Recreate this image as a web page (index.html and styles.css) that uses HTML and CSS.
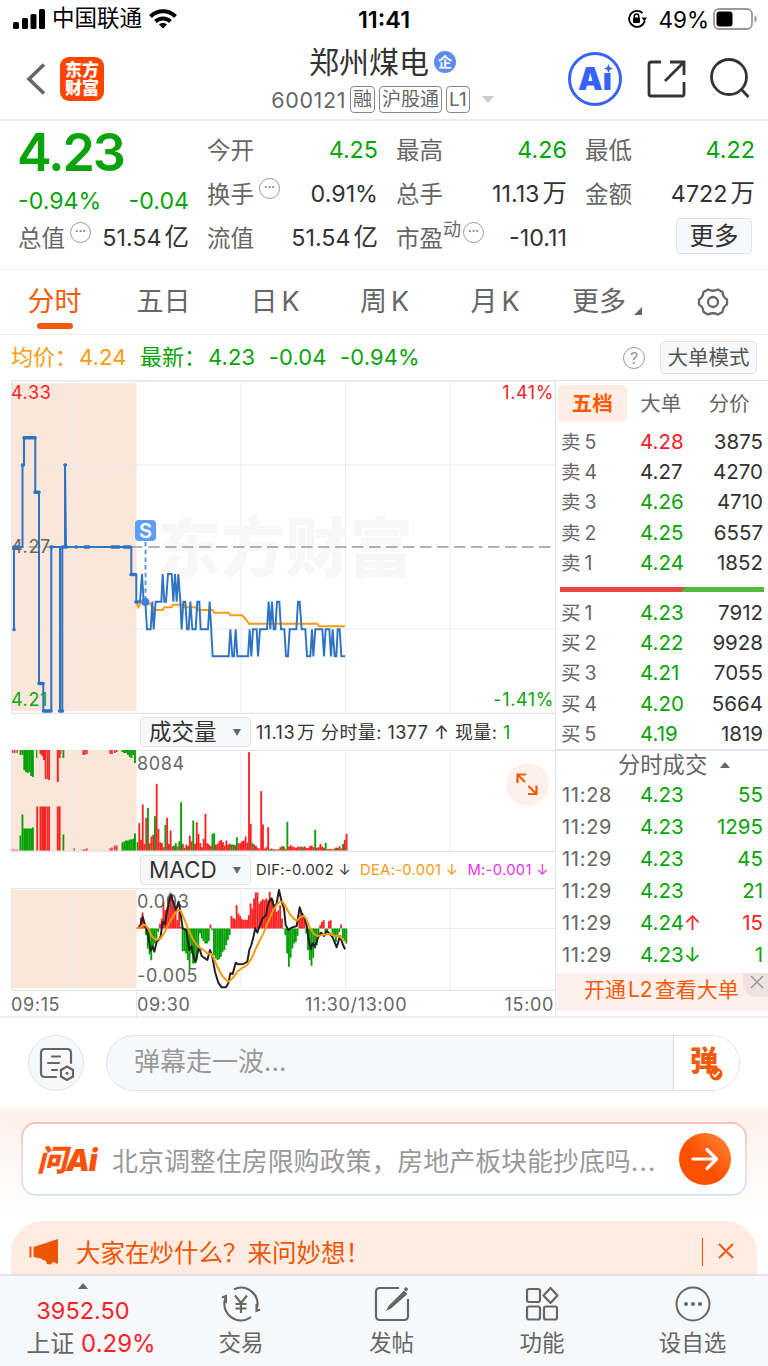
FILE: index.html
```html
<!DOCTYPE html>
<html lang="zh-CN">
<head>
    <meta charset="UTF-8">
    <meta name="viewport" content="width=device-width, initial-scale=1.0">
    <title>郑州煤电 600121</title>
    <link rel="stylesheet" href="styles.css">
</head>
<body>
    <div class="status-bar">
        <div class="status-left">
            <svg width="33" height="20" viewBox="0 0 33 20"><rect x="0" y="13" width="6" height="7" rx="1.5"/><rect x="9" y="9" width="6" height="11" rx="1.5"/><rect x="17.500" y="5" width="6" height="15" rx="1.500"/><rect x="26" y="0" width="6" height="20" rx="1.500"/></svg>
            <span class="carrier">中国联通</span>
            <svg width="28" height="20" viewBox="0 0 28 20" fill="none" stroke="#000" stroke-width="4"><path d="M1.500 7.500C8.500 .5 19.500 .5 26.500 7.500"/><path d="M6.500 12.500c4.200-4 10.800-4 15 0"/><path d="M14 19.500l-4-4c2-2 6-2 8 0z" fill="#000" stroke="none"/></svg>
        </div>
        <div class="clock">11:41</div>
        <div class="status-right">
            <svg width="20" height="20" viewBox="0 0 20 20" fill="none" stroke="#000" stroke-width="1.800"><path d="M15.500 4A8 8 0 1 0 17.800 12"/><path d="M14.500 8.500h5.500l-2.500 4z" fill="#000" stroke="none"/><rect x="6" y="8.500" width="7" height="5.500" rx="1" fill="#000" stroke="none"/><path d="M7.300 9V7.300a2.200 2.200 0 0 1 4.400 0V9" stroke-width="1.500"/></svg>
            <span>49%</span>
            <svg class="battery" width="45" height="22" viewBox="0 0 45 22"><rect x="1" y="1" width="38" height="20" rx="5" fill="none" stroke="#999" stroke-width="1.800"/><rect x="3.500" y="3.500" width="16" height="15" rx="3"/><path d="M41.500 7.500c3 1.200 3 5.800 0 7z" fill="#999"/></svg>
        </div>
    </div>

    <header class="header">
        <div class="header-left">
            <svg width="20" height="32" viewBox="0 0 20 32" fill="none" stroke="#666" stroke-width="3.600"><path d="M18 1.500L3 16l15 14.500"/></svg>
            <div class="logo">东方<br>财富</div>
        </div>
        <div class="header-title">
            <h1>郑州煤电<span class="badge-qi">企</span></h1>
            <div class="code">600121<span class="tag">融</span><span class="tag">沪股通</span><span class="tag">L1</span><i class="arrow-down"></i></div>
        </div>
        <div class="header-right">
            <div class="ai-badge">Ai<svg width="9" height="9" viewBox="0 0 10 10"><path d="M5 0l1.500 3.500L10 5 6.500 6.500 5 10 3.500 6.500 0 5l3.500-1.500z" fill="#3563ff"/></svg></div>
            <svg width="40" height="40" viewBox="0 0 40 40" fill="none" stroke="#333" stroke-width="2.800"><path d="M15 3H5a2 2 0 0 0-2 2v30a2 2 0 0 0 2 2h31a2 2 0 0 0 2-2V23"/><path d="M24 3h14v13M38 3L19 22"/></svg>
            <svg width="42" height="42" viewBox="0 0 42 42" fill="none" stroke="#333" stroke-width="2.800"><circle cx="20" cy="19" r="17.500"/><path d="M32 31l7.500 8"/></svg>
        </div>
    </header>

    <section class="quote">
        <div class="price-box">
            <div class="price">4.23</div>
            <div class="change"><span>-0.94%</span><span>-0.04</span></div>
            <div class="cell"><label>总值<i class="dots">•••</i></label><b>51.54<em>亿</em></b></div>
        </div>
        <div class="quote-col">
            <div class="cell"><label>今开</label><b class="green">4.25</b></div>
            <div class="cell"><label>换手<i class="dots">•••</i></label><b>0.91%</b></div>
            <div class="cell"><label>流值</label><b>51.54<em>亿</em></b></div>
        </div>
        <div class="quote-col">
            <div class="cell"><label>最高</label><b class="green">4.26</b></div>
            <div class="cell"><label>总手</label><b>11.13<em>万</em></b></div>
            <div class="cell"><label>市盈<sup>动</sup><i class="dots tight">•••</i></label><b>-10.11</b></div>
        </div>
        <div class="quote-col">
            <div class="cell"><label>最低</label><b class="green">4.22</b></div>
            <div class="cell"><label>金额</label><b>4722<em>万</em></b></div>
            <div class="cell right"><button class="more-btn">更多</button></div>
        </div>
    </section>

    <nav class="tabs">
        <span class="active">分时</span>
        <span>五日</span>
        <span>日<i class="k">K</i></span>
        <span>周<i class="k">K</i></span>
        <span>月<i class="k">K</i></span>
        <span>更多<i class="corner"></i></span>
        <span><svg width="32" height="30" viewBox="0 0 32 30" fill="none" stroke="#666" stroke-width="2.300" stroke-linejoin="round"><path d="M11 2.500q5 2.500 10 0l4.500 2.500q.5 5.500 4.500 7.500v5q-4 2-4.500 7.500l-4.500 2.500q-5-2.500-10 0L6.500 25Q6 19.500 2 17.500v-5Q6 10.500 6.500 5z"/><circle cx="16" cy="15" r="5"/></svg></span>
    </nav>

    <div class="avg-row">
        <span class="orange">均价：</span><span class="orange num-avg">4.24</span>
        <span class="green">最新：</span><span class="green num-avg">4.23</span><span class="green num-avg">-0.04</span><span class="green num-avg">-0.94%</span>
        <span class="help">?</span>
        <button class="mode-btn">大单模式</button>
    </div>

    <main class="main">
        <div class="charts">
            <svg class="price-chart" width="545" height="334" viewBox="11 380 545 334">
                <rect x="11" y="383" width="125.500" height="328" fill="#fbe6da"/>
                <path class="grid" d="M74 383v328M241 383v328M345.500 383v328M450 383v328M12 465h543M12 629h543"/>
                <path class="frame" d="M11.500 713V381H555M11 713.500h544"/>
                <text x="157" y="571" class="watermark">东方财富</text>
                <path d="M12 547h543" stroke="#999" stroke-width="1.300" stroke-dasharray="11.500 5.500"/>
                <text x="11" y="399" class="lbl red">4.33</text>
                <text x="11" y="553" class="lbl">4.27</text>
                <text x="11" y="706" class="lbl green">4.21</text>
                <text x="554" y="399" class="lbl red end">1.41%</text>
                <text x="554" y="706" class="lbl green end">-1.41%</text>
                <g transform="translate(130 500) scale(.33333)" fill="none" stroke-width="5.800">
                    <path stroke="#fb9a0e" d="M20 312L25 322 31 310 36 305 60 310 66 320 78 330 98 330 103 322 124 322 129 314 160 314 165 322 197 322 202 330 248 330 253 338 296 338 301 346 336 346 347 357 357 371 562 371 567 379 645 379"/>
                    <path stroke="#2f73c4" d="M20 305H30L36 222 41 305H46L51 388H62L67 305 71 388 77 305H94L98 222 103 305H108L114 222H125L130 305 135 222 140 305 145 222 151 305 155 388 160 305H166L171 388H176L181 305 187 388H197L202 305H208L212 388H234L239 305 248 469H296L301 388 307 469H312L317 388 322 469H354L359 388 364 469 369 388H380L384 469 390 388H411L416 305 421 388 426 305 431 388H436L441 305H448L453 388H463L468 469H474L479 388H499L504 305H509L515 388H526L531 469H541L546 388 550 469 556 388H577L582 469 587 388H598L603 469 608 388 614 469H619L623 388H629L634 469H645"/>
                </g>
                <path fill="none" stroke="#2f73c4" stroke-width="2" d="M14 630V547H22.500V465H24V437.700H35.300V492.300H39V683.500H43.300V711H51.300V547H60V711H62.300V547H65V465L66 547H131.300V574.500H136.300V602H140"/>
                <path stroke="#2f73c4" stroke-width="3.600" stroke-linecap="round" d="M14 547h4M24 437.700h11M35 492.300h4M39 683.500h4M43.500 711h7.500M59.500 711h3M22.500 465h1M65 465h.5M51 547h1M62.500 547h4M76 547h.5M85 547h4M112 547h7M124 547h6M131 574.500h4M136 602h2M14 629.500h.1"/>
                <path d="M145.500 542v60" stroke="#4793fb" stroke-width="1.800" stroke-dasharray="4.500 3.200"/>
                <circle cx="145.300" cy="602" r="4" fill="#3d7de0"/>
                <rect x="135" y="520" width="21" height="21" rx="4" fill="#5c9ffb"/>
                <text x="145.500" y="537.500" class="mark">S</text>
            </svg>

            <div class="indicator">
                <button class="select">成交量</button>
                <span class="vol-info">11.13<em>万</em> 分时量: 1377 ↑ 现量: <i class="green">1</i></span>
            </div>
            <div class="vol-wrap">
                <svg width="545" height="102" viewBox="11 750 545 102">
                    <rect x="11" y="750" width="125.500" height="101" fill="#fbe6da"/>
                    <path class="grid" d="M74 752v99M241 752v99M345.500 752v99M450 752v99"/>
                    <path class="frame" d="M11.500 750v101.500H555M11 750.300h544"/>
                    <text x="137" y="770" class="lbl">8084</text>
                    <g id="volume"></g>
                </svg>
                <span class="expand"><svg width="24" height="24" viewBox="0 0 24 24" fill="none" stroke="#f05a0a" stroke-width="2.200"><path d="M2.500 11V2.500H11M2.500 2.500L10 10M13 22h8.500v-8.500M21.500 22L13.500 14"/></svg></span>
            </div>

            <div class="indicator macd-row">
                <button class="select">MACD</button>
                <span class="macd-info"><i>DIF:-0.002 ↓</i><i class="orange">DEA:-0.001 ↓</i><i class="purple">M:-0.001 ↓</i></span>
            </div>
            <svg class="macd-chart" width="545" height="103" viewBox="11 888 545 103">
                <rect x="11" y="890" width="125.500" height="98" fill="#fbe6da"/>
                <path class="grid" d="M74 890v98M241 890v98M345.500 890v98M450 890v98M136.500 928.500H555"/>
                <path class="frame" d="M11.500 888v102M11 888.500h544M11 990.300h544"/>
                <g id="macd"></g>
                <text x="137" y="908" class="lbl">0.003</text>
                <text x="137" y="982" class="lbl">-0.005</text>
                <g transform="translate(120 850) scale(.33333)" fill="none" stroke-width="6" stroke-linejoin="round">
                    <path stroke="#222" d="M51 235L60 232 68 200 76 228 82 245 92 302 98 290 103 305 110 275 118 268 122 258 128 215 135 222 140 190 147 155 153 135 158 152 163 165 168 180 176 155 183 200 188 235 198 240 203 265 208 300 215 290 222 325 227 335 237 290 245 318 262 330 270 300 276 315 285 365 295 398 305 412 318 412 325 400 331 370 338 372 347 338 355 343 370 342 382 335 388 300 394 285 400 262 406 235 412 248 418 230 428 205 438 195 443 168 450 150 455 145 462 172 470 160 477 120 485 155 492 175 497 225 505 240 515 233 530 228 539 172 545 190 552 200 560 225 565 265 573 298 578 280 585 290 595 260 603 248 612 258 620 243 628 250 638 262 650 292 660 258 668 282 675 298"/>
                    <path stroke="#fb9a0e" d="M51 235L60 234 68 225 76 225 85 235 95 258 108 270 122 265 135 245 150 215 165 190 175 180 182 182 192 205 205 238 220 270 235 290 250 300 262 310 275 312 290 345 305 375 318 390 327 395 340 382 355 362 370 352 382 345 395 325 410 290 430 250 445 215 460 180 472 162 480 155 488 155 498 172 508 190 520 205 530 212 540 202 550 198 558 205 568 230 580 250 592 258 610 254 630 252 645 258 655 256 665 265 675 275"/>
                </g>
            </svg>
            <div class="axis"><span>09:15</span><span>09:30</span><span>11:30/13:00</span><span>15:00</span></div>
        </div>

        <aside class="side">
            <div class="side-tabs"><span class="active">五档</span><span>大单</span><span>分价</span></div>
            <div class="book">
                <div class="row"><span>卖<i>5</i></span><b class="red">4.28</b><b>3875</b></div>
                <div class="row"><span>卖<i>4</i></span><b>4.27</b><b>4270</b></div>
                <div class="row"><span>卖<i>3</i></span><b class="green">4.26</b><b>4710</b></div>
                <div class="row"><span>卖<i>2</i></span><b class="green">4.25</b><b>6557</b></div>
                <div class="row"><span>卖<i>1</i></span><b class="green">4.24</b><b>1852</b></div>
            </div>
            <div class="ratio"></div>
            <div class="book">
                <div class="row"><span>买<i>1</i></span><b class="green">4.23</b><b>7912</b></div>
                <div class="row"><span>买<i>2</i></span><b class="green">4.22</b><b>9928</b></div>
                <div class="row"><span>买<i>3</i></span><b class="green">4.21</b><b>7055</b></div>
                <div class="row"><span>买<i>4</i></span><b class="green">4.20</b><b>5664</b></div>
                <div class="row"><span>买<i>5</i></span><b class="green">4.19</b><b>1819</b></div>
            </div>
            <div class="deal-title">分时成交<i class="arrow-up"></i></div>
            <div class="deals">
                <div class="row"><span>11:28</span><b class="green">4.23</b><b class="green">55</b></div>
                <div class="row"><span>11:29</span><b class="green">4.23</b><b class="green">1295</b></div>
                <div class="row"><span>11:29</span><b class="green">4.23</b><b class="green">45</b></div>
                <div class="row"><span>11:29</span><b class="green">4.23</b><b class="green">21</b></div>
                <div class="row"><span>11:29</span><b class="green">4.24<u class="red">↑</u></b><b class="red">15</b></div>
                <div class="row"><span>11:29</span><b class="green">4.23<u>↓</u></b><b class="green">1</b></div>
            </div>
            <div class="l2">开通<i>L2</i>查看大单<span class="l2-close"><svg width="14" height="14" viewBox="0 0 14 14" stroke="#999" stroke-width="1.500"><path d="M1 1l12 12M13 1L1 13"/></svg></span></div>
        </aside>
    </main>

    <section class="barrage">
        <div class="note-btn"><svg width="36" height="34" viewBox="0 0 36 34" fill="none" stroke="#666" stroke-width="2.200"><path d="M17 30H6q-4 0-4-4V6q0-4 4-4h22q4 0 4 4v10M13 9.500h8M9 16h11M13 23h5" stroke-linecap="round"/><path d="M28 19.500l6 3.500v6.500L28 33l-6-3.500V23z"/><circle cx="28" cy="26.300" r="1.500" fill="#666" stroke="none"/></svg></div>
        <div class="barrage-input"><span>弹幕走一波...</span><div class="dan">弹<svg width="14" height="14" viewBox="0 0 14 14"><circle cx="7" cy="7" r="6.500" fill="#f05a0a"/><path d="M3.500 7l2.500 2.600 4.500-5" fill="none" stroke="#fff" stroke-width="1.600"/></svg></div></div>
    </section>

    <section class="ask">
        <div class="ask-card">
            <span class="ask-logo">问Ai</span>
            <span class="ask-text">北京调整住房限购政策，房地产板块能抄底吗<i>...</i></span>
            <span class="go"><svg width="28" height="24" viewBox="0 0 28 24" fill="none" stroke="#fff" stroke-width="3.200" stroke-linecap="round" stroke-linejoin="round"><path d="M2 12h23M16 2.500l9.500 9.500-9.500 9.500"/></svg></span>
        </div>
    </section>

    <div class="notice">
        <svg width="30" height="26" viewBox="0 0 30 26" fill="#ee5500"><path d="M.5 7.500h2v11h-2zM4.500 8L29 0v25l-5-2-2 2.500-4-.5-1.500-3.500-2.500-.5L12 19.500 4.500 18z"/></svg>
        <span class="notice-text">大家在炒什么？来问妙想！</span>
        <span class="notice-close"><svg width="16" height="16" viewBox="0 0 16 16" stroke="#ee5500" stroke-width="1.900"><path d="M1 1l14 14M15 1L1 15"/></svg></span>
    </div>

    <footer class="bottom-nav">
        <div class="index-box"><i class="arrow-up"></i><div class="index-val">3952.50</div><div class="index-name">上证 <b>0.29%</b></div></div>
        <div class="nav-item"><svg width="40" height="36" viewBox="0 0 40 36" fill="none" stroke="#666" stroke-width="2.100"><path d="M13 3.200A16.500 16.500 0 0 1 36 22M30 31A16.500 16.500 0 0 1 4.500 12"/><path d="M39 23.500L35.500 25V18M1 11.500L5 10v7"/><path d="M14 9.500l6 7.500 6-7.500M20 17v10M14.500 18h11M14.500 22.500h11"/></svg><span>交易</span></div>
        <div class="nav-item"><svg width="36" height="36" viewBox="0 0 36 36" fill="none" stroke="#666" stroke-width="2.200"><path d="M25 2H6Q2 2 2 6v24q0 4 4 4h24q4 0 4-4V13"/><path d="M30 4.500l3.500 3.500L17 22.500l-5 2.500 2.500-5z" fill="#666" stroke="none"/><path d="M31 4.500l2-2.500" stroke-width="3.500"/></svg><span>发帖</span></div>
        <div class="nav-item"><svg width="34" height="36" viewBox="0 0 34 36" fill="none" stroke="#666" stroke-width="2.200" stroke-linejoin="round"><rect x="2" y="3" width="13" height="13" rx="2"/><rect x="2" y="20.500" width="13" height="13" rx="2"/><rect x="19" y="20.500" width="13" height="13" rx="2"/><path d="M25.500 2l7 7.500-7 7.500-7-7.500z"/></svg><span>功能</span></div>
        <div class="nav-item"><svg width="36" height="36" viewBox="0 0 36 36" fill="#666"><circle cx="18" cy="18" r="16.500" fill="none" stroke="#666" stroke-width="2"/><circle cx="11" cy="18" r="2"/><circle cx="18" cy="18" r="2"/><circle cx="25" cy="18" r="2"/></svg><span>设自选</span></div>
    </footer>
    <script src="script.js"></script>
</body>
</html>
```
FILE: styles.css
```css
* {
    box-sizing: border-box;
}
body {
    margin: 0;
    width: 768px;
    height: 1366px;
    overflow: hidden;
    display: flex;
    flex-direction: column;
    background: #fff;
    color: #333;
    font-family: Inter, "Noto Sans CJK SC", sans-serif;
}
i, em, u {
    font-style: normal;
    text-decoration: none;
}
b {
    font-weight: 400;
}
button {
    font-family: inherit;
    color: #333;
    background: #f7f8fa;
    border: 1px solid #dfe3e8;
    border-radius: 4px;
    padding: 0;
}
.green { color: #0ba30b; }
.red { color: #f5222a; }
.orange { color: #fb9a0e; }
.purple { color: #e535e5; }

/* status bar */
.status-bar {
    height: 38px;
    flex: none;
    display: grid;
    grid-template-columns: 1fr auto 1fr;
    align-items: center;
    padding: 0 10px 0 13px;
    color: #000;
    font-size: 22.500px;
}
.status-left, .status-right {
    display: flex;
    align-items: center;
    gap: 7px;
}
.status-right {
    justify-content: flex-end;
    gap: 4px;
}
.status-right span {
    margin-left: 7px;
}
.carrier {
    margin-left: -1px;
    line-height: 34px;
    margin-top: -2px;
}
.clock {
    font-size: 23.500px;
    font-weight: 600;
    margin-right: 3px;
}

/* header */
.header {
    height: 83px;
    flex: none;
    display: grid;
    grid-template-columns: 1fr auto 1fr;
    align-items: center;
    border-bottom: 2px solid #eee;
    padding: 0 18px 0 26px;
}
.header-left {
    display: flex;
    align-items: center;
    gap: 14px;
}
.logo {
    width: 44px;
    height: 44px;
    border-radius: 9px;
    background: #ff4400;
    color: #fff;
    font-size: 17px;
    line-height: 18px;
    font-weight: 900;
    text-align: center;
    padding-top: 4px;
}
.header-title {
    margin-right: 11px;
}
.header-title h1 {
    margin: 0;
    display: flex;
    justify-content: center;
    align-items: center;
    font-size: 30px;
    line-height: 40px;
    font-weight: 400;
}
.badge-qi {
    width: 22px;
    height: 22px;
    margin-left: 5px;
    border-radius: 50%;
    background: #5b8def;
    color: #fff;
    font-size: 14px;
    line-height: 21px;
    font-weight: 700;
    text-align: center;
}
.code {
    display: flex;
    align-items: center;
    height: 34px;
    padding-top: 2px;
    gap: 4px;
    font-size: 21.500px;
    letter-spacing: .6px;
    color: #666;
}
.tag {
    border: 1.500px solid #888;
    border-radius: 4px;
    font-size: 19px;
    line-height: 25px;
    letter-spacing: 0;
    padding: 0 2px;
}
.arrow-down {
    border: 6px solid transparent;
    border-top: 7px solid #ccc;
    border-bottom: 0;
    margin-left: 8px;
}
.arrow-up {
    display: inline-block;
    border: 5.500px solid transparent;
    border-bottom: 6px solid #666;
    border-top: 0;
}
.header-right {
    display: flex;
    justify-content: flex-end;
    align-items: center;
    gap: 24px;
}
.header-right > svg:last-child {
    margin: 0 -1px 0 -1px;
}
.ai-badge {
    width: 54px;
    height: 54px;
    border: 3px solid #3563ff;
    border-radius: 50%;
    color: #3563ff;
    font-size: 31px;
    line-height: 48px;
    font-weight: 900;
    text-align: center;
    position: relative;
}
.ai-badge svg {
    position: absolute;
    right: 6px;
    top: 9px;
    background: #fff;
}

/* quote */
.quote {
    height: 149px;
    flex: none;
    display: grid;
    grid-template-columns: 171px 171px 171px 170px;
    column-gap: 18px;
    padding: 6px 0 0 18px;
    border-bottom: 1px solid #eee;
}
.price {
    height: 50px;
    color: #0ba30b;
    font-size: 52px;
    line-height: 52px;
    font-weight: 600;
    letter-spacing: -2px;
    margin-left: -1px;
}
.change {
    height: 38px;
    padding-top: 9px;
    display: flex;
    justify-content: space-between;
    align-items: center;
    color: #0ba30b;
    font-size: 23.200px;
}
.cell {
    height: 44px;
    display: flex;
    justify-content: space-between;
    align-items: center;
    font-size: 23.300px;
}
.cell label {
    color: #666;
    font-size: 23.500px;
    display: flex;
    align-items: center;
}
.cell b {
    white-space: nowrap;
}
.cell em {
    margin-left: 3px;
    font-size: 24.500px;
    line-height: 28px;
}
.cell sup {
    font-size: 18px;
    line-height: 18px;
    margin-top: -14px;
}
.dots {
    width: 21px;
    height: 21px;
    margin: -9px 0 0 5px;
    border: 1.500px solid #999;
    border-radius: 50%;
    font-size: 6.500px;
    line-height: 17px;
    text-align: center;
    color: #888;
}
.dots.tight {
    margin-left: 2px;
}
.right {
    justify-content: flex-end;
}
.more-btn {
    width: 76px;
    height: 36px;
    font-size: 24.500px;
    line-height: 32px;
    margin: -2px 3px 0 0;
}

/* period tabs */
.tabs {
    height: 65px;
    flex: none;
    display: grid;
    grid-template-columns: 109px 109px 114px 105px 116px 92px 123px;
    align-items: center;
    border-bottom: 1px solid #eee;
    font-size: 27px;
    color: #666;
    text-align: center;
}
.tabs span {
    position: relative;
    line-height: 64px;
    height: 64px;
    white-space: nowrap;
}
.tabs svg {
    display: block;
    margin: 17px 0 0 52px;
}
.k {
    margin-left: 4px;
}
.tabs .active {
    color: #f05a0a;
}
.tabs .active::after {
    content: "";
    position: absolute;
    left: 37px;
    bottom: 5px;
    width: 36px;
    height: 6px;
    border-radius: 3px;
    background: #f05a0a;
}
.corner {
    display: inline-block;
    border-left: 8px solid transparent;
    border-bottom: 8px solid #666;
    margin: 0 -16px -4px 8px;
}

.avg-row {
    height: 45px;
    flex: none;
    display: flex;
    align-items: center;
    padding: 0 11px;
    font-size: 22px;
    line-height: 40px;
}
.avg-row > span {
    margin-top: -2px;
}
.avg-row > .num-avg {
    margin-right: 13.500px;
    margin-left: 2px;
    letter-spacing: .1px;
}
.num-avg + .num-avg {
    margin-left: 0 !important;
}
.avg-row > .help {
    margin: 0 0 0 auto;
    width: 22px;
    height: 22px;
    border: 1.500px solid #999;
    border-radius: 50%;
    color: #999;
    font-size: 16px;
    line-height: 20px;
    text-align: center;
}
.mode-btn {
    width: 97px;
    height: 33px;
    margin-left: 15px;
    font-size: 20.500px;
    line-height: 29px;
    color: #555;
}

/* charts */
.main {
    height: 638px;
    flex: none;
    display: flex;
    border-bottom: 2px solid #eceff2;
}
.charts {
    width: 556px;
    padding-left: 11px;
    border-right: 1px solid #e2e6ec;
    display: flex;
    flex-direction: column;
}
.charts > svg, .vol-wrap svg {
    display: block;
    flex: none;
}
.grid {
    stroke: #e9ebf1;
    stroke-width: 1;
    fill: none;
}
.frame {
    stroke: #e2e6ea;
    stroke-width: 1.300;
    fill: none;
}
.lbl {
    font-size: 18px;
    letter-spacing: .6px;
    fill: #666;
}
.lbl.red { fill: #f5222a; }
.lbl.green { fill: #0ba30b; }
.end { text-anchor: end; }
.watermark {
    font-size: 64px;
    font-weight: 900;
    fill: #f7f7f8;
}
.mark {
    font-size: 20px;
    font-weight: 600;
    fill: #fff;
    text-anchor: middle;
}
.indicator {
    height: 36px;
    flex: none;
    display: flex;
    align-items: center;
    padding-left: 129px;
    gap: 5px;
    white-space: nowrap;
}
.select {
    width: 111px;
    height: 30px;
    flex: none;
    display: flex;
    align-items: center;
    justify-content: space-between;
    padding: 0 9px 0 8px;
    font-size: 22.500px;
    line-height: 28px;
}
.select::after {
    content: "";
    border: 4.500px solid transparent;
    border-top: 7px solid #666;
    border-bottom: 0;
}
.vol-info {
    font-size: 18px;
    letter-spacing: .45px;
    margin-top: -3px;
}
.vol-info em {
    margin-left: 2px;
}
.vol-wrap {
    height: 102px;
    flex: none;
    position: relative;
}
.expand {
    position: absolute;
    right: 6px;
    top: 13px;
    width: 43px;
    height: 43px;
    border-radius: 50%;
    background: #fef0ea;
    padding: 9px;
}
.macd-info {
    font-size: 14.700px;
    letter-spacing: .35px;
    display: flex;
    gap: 9px;
}
.axis {
    height: 26px;
    display: grid;
    grid-template-columns: 125px 169px 1fr auto;
    font-size: 18px;
    letter-spacing: .65px;
    line-height: 28px;
    color: #666;
    padding-right: 1px;
}
.axis span:nth-child(2) {
    border-left: 1px solid #e2e6ec;
}

/* order book */
.side {
    flex: 1;
    display: flex;
    flex-direction: column;
    border-top: 1px solid #e2e6ec;
}
.side-tabs {
    height: 46px;
    display: flex;
    padding: 4px 0 0 2px;
    font-size: 20.500px;
    line-height: 37px;
    color: #666;
    text-align: center;
}
.side-tabs span {
    width: 68.500px;
    height: 37px;
}
.side-tabs .active {
    border-radius: 5px;
    background: #feeee6;
    color: #ff5a00;
    font-weight: 700;
}
.row {
    display: grid;
    grid-template-columns: 79px 66px 57px;
    padding-left: 5px;
    height: 30.200px;
    line-height: 30.200px;
    font-size: 20.500px;
}
.row span {
    color: #666;
    font-size: 19.500px;
}
.row span i {
    margin-left: 4px;
}
.row b:last-child {
    text-align: right;
}
.ratio {
    height: 5px;
    width: 204px;
    margin: 9px 0 6px 4px;
    flex: none;
    background: linear-gradient(135deg, #ea4545 60%, #58b93f 60%);
}
.deal-title {
    height: 30px;
    flex: none;
    border-top: 2px solid #e2e6ec;
    padding-left: 62px;
    font-size: 22.300px;
    line-height: 27px;
    color: #666;
}
.deal-title i {
    margin: 0 0 5px 13px;
}
.deals .row {
    height: 32px;
    line-height: 32px;
}
.deals .row span {
    font-size: 20px;
    letter-spacing: .7px;
    padding-left: 1px;
}
.l2 {
    height: 38px;
    margin-top: 2px;
    flex: none;
    background: #fef0ea;
    color: #f05a0a;
    font-size: 21px;
    line-height: 34px;
    padding-left: 28px;
    position: relative;
    white-space: nowrap;
}
.l2 i {
    margin: 0 2px;
}
.l2-close {
    position: absolute;
    right: 0;
    top: 0;
    width: 25px;
    height: 24px;
    background: #eee3de;
    border-radius: 0 0 0 14px;
    line-height: 18px;
    padding-left: 7px;
}

/* barrage input */
.barrage {
    height: 90px;
    flex: none;
    display: flex;
    align-items: center;
    padding: 0 28px;
    gap: 22px;
}
.note-btn {
    width: 56px;
    height: 56px;
    border: 1.500px solid #e0e3e8;
    border-radius: 50%;
    background: #f7f8fa;
    padding: 11px 0 0 10px;
}
.barrage-input {
    width: 634px;
    height: 56px;
    border: 1.500px solid #e0e3e8;
    border-radius: 28px;
    background: #f7f8fa;
    display: flex;
    overflow: hidden;
    font-size: 26px;
    line-height: 51px;
    color: #999;
    padding-left: 27px;
}
.dan {
    margin-left: auto;
    width: 66px;
    background: #fff;
    border-left: 1px solid #d8dce2;
    color: #f05a0a;
    font-size: 28px;
    font-weight: 900;
    padding-left: 16px;
    position: relative;
}
.dan svg {
    position: absolute;
    left: 35px;
    top: 31px;
}

/* ask AI */
.ask {
    height: 113px;
    flex: none;
    padding: 14px 21px;
    background: linear-gradient(#fef0ea, #fff 95%);
}
.ask-card {
    height: 74px;
    border: 2px solid transparent;
    border-radius: 15px;
    background: linear-gradient(#fff, #fff) padding-box, linear-gradient(#ffc3b5, #f3dfe2 60%, #d8e4f8) border-box;
    display: flex;
    align-items: center;
    padding: 0 14px;
}
.ask-logo {
    width: 75px;
    color: #ff5208;
    font-size: 30px;
    font-weight: 900;
    font-style: italic;
    letter-spacing: -1px;
    margin-top: -2px;
    white-space: nowrap;
}
.ask-text {
    font-size: 25.950px;
    color: #999;
    white-space: nowrap;
}
.ask-text i {
    letter-spacing: 1.200px;
}
.go {
    width: 52px;
    height: 52px;
    margin-left: auto;
    border-radius: 50%;
    background: linear-gradient(45deg, #ff5000 45%, #ff8a3c);
    display: flex;
    align-items: center;
    justify-content: center;
}

.notice {
    height: 53px;
    flex: none;
    margin: 0 11px;
    border-radius: 32px 32px 0 0;
    background: #feece3;
    color: #ee5500;
    display: flex;
    align-items: center;
    padding: 8px 23px 0 18px;
    font-size: 24.500px;
}
.notice-text {
    margin-left: 17px;
}
.notice-close {
    margin-left: auto;
    border-left: 1.500px solid #ee5500;
    height: 28px;
    padding-left: 15px;
    line-height: 24px;
}

/* bottom nav */
.bottom-nav {
    height: 92px;
    flex: none;
    display: grid;
    grid-template-columns: 166px 150px 151px 150px 151px;
    border-top: 2px solid #e2e4e8;
    background: #f7f8fa;
    color: #666;
    text-align: center;
}
.index-box {
    padding-left: 16px;
    font-size: 24px;
    white-space: nowrap;
    line-height: 33px;
}
.index-box .arrow-up {
    display: block;
    width: 0;
    margin: 7px auto 5px 62px;
}
.index-box b, .index-val {
    color: #f5222a;
}
.index-val {
    font-size: 23.500px;
    margin-left: -16px;
}
.nav-item {
    display: flex;
    flex-direction: column;
    align-items: center;
    padding-top: 10px;
    font-size: 22.500px;
    line-height: 42px;
}
```
FILE: script.js
```js
const RED = '#fa2323';
const GREEN = '#05a005';
const STEP = 1.742;

function bar(group, x, y, w, h, color) {
    const rect = document.createElementNS('http://www.w3.org/2000/svg', 'rect');
    rect.setAttribute('x', x);
    rect.setAttribute('y', y);
    rect.setAttribute('width', w);
    rect.setAttribute('height', h);
    rect.setAttribute('fill', color);
    group.appendChild(rect);
}

const volume = document.getElementById('volume');

// call auction: [x, width, top bar, bottom bar], negative = falling
const auction = [
    [12, 1.4, 3, 1], [14, 1.4, 3, 1], [16.500, 1.4, 3, 1],
    [19.500, 1.9, -5, -15], [21.500, 1.9, -5, -36], [23.300, 1.9, -20, -22], [25, 1.9, -22, -22],
    [26.700, 1.9, -23, -22], [28.400, 1.9, -22, -22], [30.200, 1.9, -26, -22], [32, 1.8, -27, -23],
    [36, 1.3, -8, 0], [36.300, 1.8, 0, 44], [39.500, 2, 4, 44], [41.300, 2, 6, 44], [43, 2, 10, 44],
    [44.700, 1.7, 29, 44], [46.800, 1.7, 29, 44], [48.300, 1.7, 30, 44],
    [56.800, 2, 32, 44], [58.800, 1.8, 8, 44], [60.500, 1, 4, 0], [62.500, 1.8, -8, -16], [73.500, 1.4, 0, 2],
    [82.500, 1.7, 5, 1], [84.200, 1.5, 5, 1], [86, 1.6, 4, 2],
    [109.500, 1.7, 4, 2], [111.300, 1.5, 4, 3], [114, 1.6, 3, 5], [116, 1.5, 2, 5],
    [121.500, 1.9, -2, -8], [123.300, 1.9, -3, -9], [125.100, 1.9, -3, -10], [127, 1.9, -5, -10],
    [128.800, 1.9, -7, -11], [130.500, 1.9, -8, -11], [132.300, 1.7, -5, -12], [134, 1.9, -13, -17]
];
auction.forEach(([x, w, top, bottom]) => {
    bar(volume, x, 750, w, Math.abs(top), top < 0 ? GREEN : RED);
    bar(volume, x, 850.5 - Math.abs(bottom), w, Math.abs(bottom), bottom < 0 ? GREEN : RED);
});

// one value per minute from 09:30
const minutes = [
    -25, 82, 32, 138, 20, 98, -128, 22, 42, 47, -103, 200, 65, 25, 22, 10, -77, 98, 20, 60,
    12, -15, -22, 12, -28, -145, 20, 8, 18, -14, 45, 28, -90, 20, 85, 50, 22, 10, 35, 110,
    22, 18, 14, -50, -52, 18, 20, 28, 32, 25, 15, 30, 18, 20, -18, -18, 16, -40, 22, 22,
    28, 30, 42, 24, 295, 80, -22, 18, 14, 8, 6, 178, 78, 6, 10, 70, 4, -6, 4, 3,
    3, 4, 10, -13, 12, 5, -86, 12, 16, 12, 10, 8, 12, 10, 12, -10, 12, 8, 8, 13,
    15, 10, -62, 8, 10, 20, 12, 8, -23, 4, 4, 5, 3, 6, -9, 8, 13, 6, -20, 32, 50
];
minutes.forEach((v, i) => {
    const h = Math.abs(v) / 3;
    bar(volume, 136.6 + i * STEP, 850.5 - h, 1.85, h, v < 0 ? GREEN : RED);
});

const macd = document.getElementById('macd');
const hist = [
    2, 10, 32, 48, 15, -20, -60, -78, -95, -60, -45, -30, -10, 15, 30, 80, 55, 60, 95, 108,
    100, 85, 60, 25, 50, 5, -68, -68, -75, -95, -120, -75, -105, -105, -95, -62, -15, -30, -38, -45,
    -45, -38, 12, -5, -80, -90, -95, -92, -85, -70, -65, -50, -35, -20, 38, 32, 28, 70, 45, 38,
    28, 26, 26, 26, 40, 75, 60, 90, 108, 108, 75, 82, 88, 85, 90, 85, 110, 90, 85, 65,
    50, 55, 70, 30, -2, -20, -75, -115, -88, -60, -45, -40, -22, 38, 50, 38, 30, -15, -65, -95,
    -112, -88, -60, -50, -25, 10, 20, 25, -15, -10, 22, 25, -15, -25, -40, -25, -10, 12, -30, -38, -45
];
hist.forEach((v, i) => {
    const h = Math.abs(v) / 3;
    bar(macd, 136.4 + i * STEP, v < 0 ? 928.5 : 928.5 - h, 1.85, h, v < 0 ? GREEN : RED);
});
```
